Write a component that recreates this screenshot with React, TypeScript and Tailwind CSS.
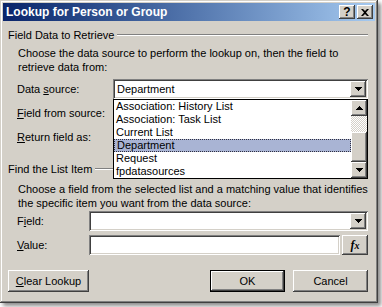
import type { ReactNode } from "react";

const raised =
  "bg-[#d4d0c8] shadow-[inset_-1px_-1px_0_#404040,inset_1px_1px_0_#ffffff,inset_-2px_-2px_0_#808080,inset_2px_2px_0_#d4d0c8]";
const sunken =
  "bg-white shadow-[inset_1px_1px_0_#808080,inset_-1px_-1px_0_#ffffff,inset_2px_2px_0_#404040,inset_-2px_-2px_0_#d4d0c8]";

const Arrow = ({ up = false }: { up?: boolean }) => (
  <svg width="7" height="4" viewBox="0 0 7 4" className={up ? "rotate-180" : ""}>
    <rect x="0" y="0" width="7" height="1" fill="#000" />
    <rect x="1" y="1" width="5" height="1" fill="#000" />
    <rect x="2" y="2" width="3" height="1" fill="#000" />
    <rect x="3" y="3" width="1" height="1" fill="#000" />
  </svg>
);

const ArrowButton = ({ up = false, className = "" }: { up?: boolean; className?: string }) => (
  <div className={`${raised} flex h-[16px] w-[16px] items-center justify-center ${className}`}>
    <Arrow up={up} />
  </div>
);

const Combo = ({ value, className = "" }: { value?: string; className?: string }) => (
  <div className={`${sunken} flex h-[20px] items-center p-[2px] ${className}`}>
    <div className="flex-1 pl-[2px] leading-[14px]">{value}</div>
    <ArrowButton />
  </div>
);

const Group = ({ children }: { children: ReactNode }) => (
  <div className="flex items-center leading-[14px]">
    <span>{children}</span>
    <div className="ml-[3px] flex-1 border-t border-b border-t-[#808080] border-b-white" />
  </div>
);

const Row = ({ label, labelW, children }: { label: ReactNode; labelW: string; children: ReactNode }) => (
  <div className="flex h-[20px] items-center pl-[9px]">
    <div className={`${labelW} leading-[14px]`}>{label}</div>
    {children}
  </div>
);

const Button = ({ children, width, def = false }: { children: ReactNode; width: string; def?: boolean }) =>
  def ? (
    <div className={`${width} h-[22px] border border-black`}>
      <div className={`${raised} flex h-full items-center justify-center`}>{children}</div>
    </div>
  ) : (
    <div className={`${raised} ${width} flex h-[22px] items-center justify-center`}>{children}</div>
  );

const sources = [
  "Association: History List",
  "Association: Task List",
  "Current List",
  "Department",
  "Request",
  "fpdatasources",
];

export default function App() {
  return (
    <div
      className="h-[307px] w-[382px] overflow-hidden bg-white text-[11px] text-black"
      style={{ fontFamily: '"Liberation Sans", Arial, sans-serif' }}
    >
      <div className="relative flex h-[303px] w-[378px] flex-col bg-[#d4d0c8] p-[3px] shadow-[inset_-1px_-1px_0_#404040,inset_1px_1px_0_#d4d0c8,inset_-2px_-2px_0_#808080,inset_2px_2px_0_#ffffff,3px_3px_4px_rgba(0,0,0,0.45)]">
        {/* title bar */}
        <div className="flex h-[18px] items-center bg-gradient-to-r from-[#0a246a] to-[#a6caf0] pl-[3px] pr-[2px]">
          <span className="flex-1 text-[12px] font-bold text-white">Lookup for Person or Group</span>
          <div className={`${raised} flex h-[14px] w-[16px] items-center justify-center text-[12px] font-bold leading-none`}>?</div>
          <div className={`${raised} ml-[2px] flex h-[14px] w-[16px] items-center justify-center`}>
            <svg width="8" height="7" viewBox="0 0 8 7">
              <path d="M0 0h2l2 2 2-2h2L5 3.5 8 7H6L4 5 2 7H0l3-3.5z" fill="#000" />
            </svg>
          </div>
        </div>

        {/* body */}
        <div className="flex flex-1 flex-col pl-[5px] pr-[7px]">
          <div className="mt-[7px]">
            <Group>Field Data to Retrieve</Group>
          </div>
          <p className="mt-[4px] ml-[10px] leading-[14px]">
            Choose the data source to perform the lookup on, then the field to
            <br />
            retrieve data from:
          </p>

          <div className="mt-[5px] flex flex-col gap-[4px]">
            <Row labelW="w-[96px]" label={<>Data <span className="underline">s</span>ource:</>}>
              <Combo value="Department" className="flex-1" />
            </Row>
            <Row labelW="w-[96px]" label={<><span className="underline">F</span>ield from source:</>}>
              <Combo className="flex-1" />
            </Row>
            <Row labelW="w-[96px]" label={<><span className="underline">R</span>eturn field as:</>}>
              <Combo className="flex-1" />
            </Row>
          </div>

          <div className="mt-[15px]">
            <Group>Find the List Item</Group>
          </div>
          <p className="mt-[6px] ml-[10px] leading-[14px]">
            Choose a field from the selected list and a matching value that identifies
            <br />
            the specific item you want from the data source:
          </p>

          <div className="mt-[1px] flex flex-col gap-[4px]">
            <Row labelW="w-[72px]" label={<>F<span className="underline">i</span>eld:</>}>
              <Combo className="flex-1" />
            </Row>
            <Row labelW="w-[72px]" label={<><span className="underline">V</span>alue:</>}>
              <div className={`${sunken} h-[20px] flex-1`} />
              <div className={`${raised} ml-[2px] flex h-[20px] w-[26px] items-center justify-center`}>
                <span
                  className="text-[12px] font-bold italic leading-none"
                  style={{ fontFamily: '"Liberation Serif", "Times New Roman", serif' }}
                >
                  f<span className="text-[10px]">x</span>
                </span>
              </div>
            </Row>
          </div>

          <div className="mt-[15px] flex items-center">
            <Button width="w-[81px]">
              <span>
                <span className="underline">C</span>lear Lookup
              </span>
            </Button>
            <div className="flex-1" />
            <Button width="w-[75px]" def>
              OK
            </Button>
            <div className="ml-[8px]">
              <Button width="w-[75px]">Cancel</Button>
            </div>
          </div>
        </div>

        {/* open dropdown list */}
        <div className="absolute left-[113px] top-[99px] flex h-[80px] w-[255px] border border-black bg-white">
          <div className="flex-1">
            {sources.map((s) => (
              <div
                key={s}
                className={`flex h-[13px] items-center pl-[2px] leading-[13px] ${
                  s === "Department" ? "border border-dotted border-[#303040] bg-[#a9b4d4] pl-[1px]" : ""
                }`}
              >
                {s}
              </div>
            ))}
          </div>
          <div className="flex w-[16px] flex-col">
            <ArrowButton up />
            <div className="h-[16px] bg-[repeating-conic-gradient(#ffffff_0_25%,#d4d0c8_0_50%)] bg-[length:2px_2px]" />
            <div className={`${raised} flex-1`} />
            <ArrowButton />
          </div>
        </div>
      </div>
    </div>
  );
}
